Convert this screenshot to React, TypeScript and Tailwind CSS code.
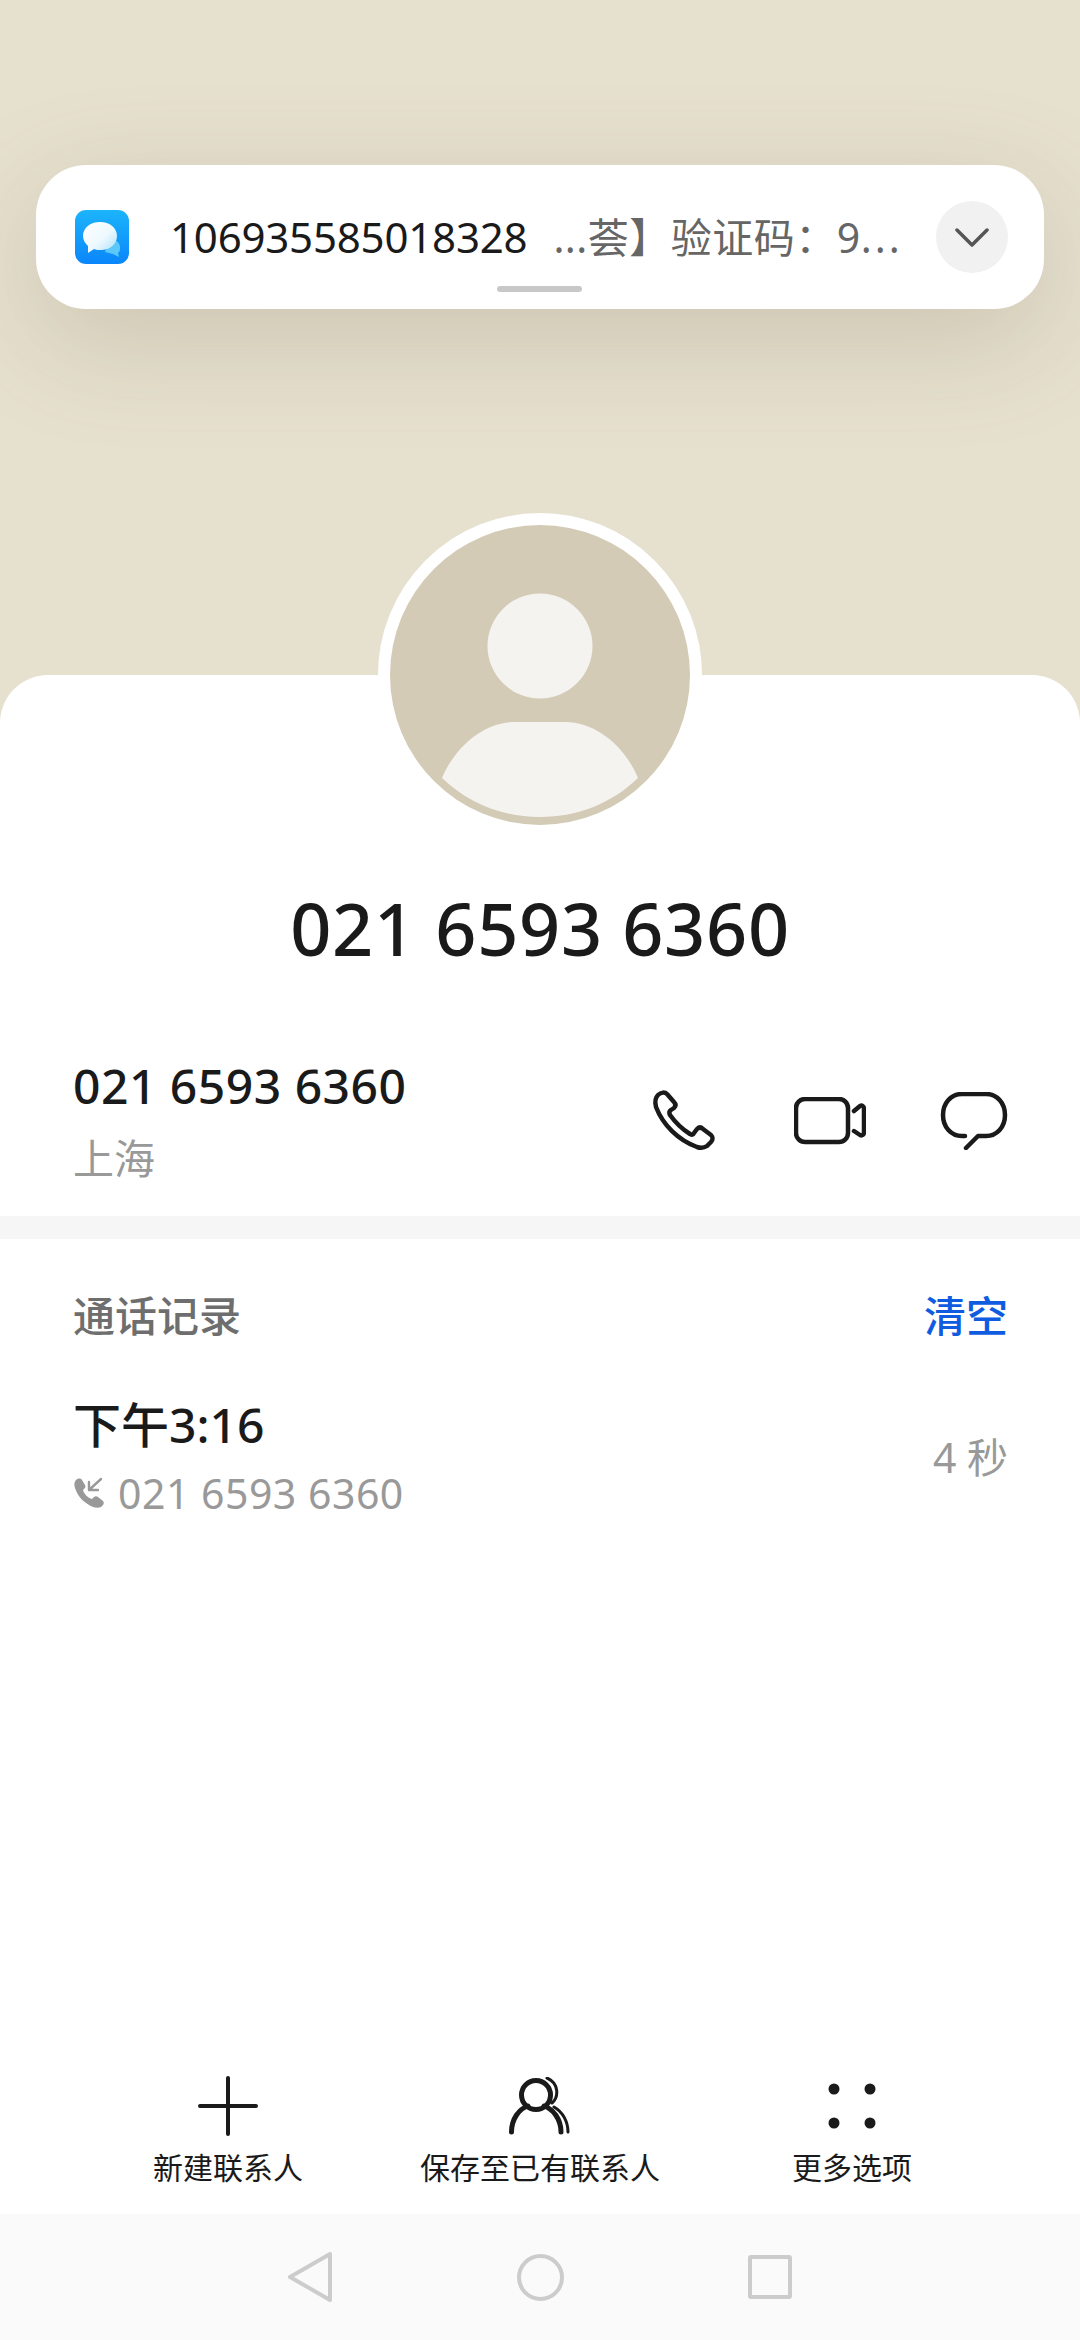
const font = { fontFamily: '"Noto Sans", "Noto Sans CJK SC", sans-serif' };

function MessageLogo() {
  return (
    <svg width="54" height="54" viewBox="0 0 54 54" className="shrink-0">
      <defs>
        <linearGradient id="logoBg" x1="0" y1="0" x2="0" y2="1">
          <stop offset="0" stopColor="#1cb4fb" />
          <stop offset="1" stopColor="#0a86fb" />
        </linearGradient>
        <linearGradient id="logoBubble" x1="0" y1="0" x2="1" y2="1">
          <stop offset="0" stopColor="#ffffff" />
          <stop offset="0.55" stopColor="#eef9fe" />
          <stop offset="1" stopColor="#a9def8" />
        </linearGradient>
      </defs>
      <rect width="54" height="54" rx="11" fill="url(#logoBg)" />
      <path d="M36 28 C42 30 46 34 45 39 C45 41 44 42 43 43 L44 47 L38 44 L30 42 Z" fill="#5cc8fa" />
      <path d="M25 12 C35 12 42 18 42 26 C42 34 35 40 26 40 C23 40 21 40 19 39 L13 43 L13 36 C10 33 8 30 8 26 C8 18 15 12 25 12 Z" fill="url(#logoBubble)" />
    </svg>
  );
}

function PhoneIcon() {
  return (
    <svg width="72" height="72" viewBox="30 35 72 72" fill="none" stroke="#1a1a1a" strokeWidth="4.5" strokeLinejoin="round" strokeLinecap="round">
      <path d="M38 45 C41 42 45 42 47 44 L54 52 C56 54 56 56 54 58 L51 60 C49 61 49 63 50 65 C55 72 62 79 70 84 C72 85 73 85 74 83 L77 79 C79 77 81 77 83 79 L91 85 C93 87 93 90 91 92 L87 96 C84 98 80 98 77 97 C58 90 43 75 36 57 C35 53 35 48 38 45 Z" />
    </svg>
  );
}

function VideoIcon() {
  return (
    <svg width="72" height="48" viewBox="0 0 72 48" fill="none" stroke="#1a1a1a" strokeWidth="4.5" strokeLinecap="round" strokeLinejoin="round">
      <rect x="2" y="2" width="52" height="43" rx="9" />
      <path d="M60 14 L66 9 C68 8 70 9 70 12 L70 35 C70 38 68 39 66 38 L60 34" />
    </svg>
  );
}

function ChatIcon() {
  return (
    <svg width="68" height="58" viewBox="0 0 68 58" fill="none" stroke="#1a1a1a" strokeWidth="4.5" strokeLinecap="round" strokeLinejoin="round">
      <path d="M25 44 L22 44 C11 44 3 35 3 23 C3 11 11 2 22 2 L46 2 C57 2 65 11 65 23 C65 35 57 44 46 44 L38 44 L26 56" />
    </svg>
  );
}

function IncomingCallIcon() {
  return (
    <svg width="32" height="32" viewBox="0 0 32 32" fill="#999999">
      <path d="M3 3 C5 1 8 1 9 3 L12 8 C13 10 12 11 11 12 L10 13 C11 17 15 21 19 22 L21 20 C22 19 24 19 25 20 L30 24 C31 25 31 27 30 28 L28 30 C26 31 23 31 20 30 C11 26 5 20 2 11 C1 8 1 5 3 3 Z" />
      <path d="M28 2 L16 13 M16 5 L16 13 L25 13" fill="none" stroke="#999999" strokeWidth="2.4" strokeLinecap="round" strokeLinejoin="round" />
    </svg>
  );
}

function ToolAction({ icon, label }: { icon: React.ReactNode; label: string }) {
  return (
    <button className="flex flex-col items-center">
      <div className="h-[60px] flex items-center justify-center">{icon}</div>
      <span className="mt-3 text-[30px] leading-[40px] text-[#1a1a1a]">{label}</span>
    </button>
  );
}

export default function App() {
  return (
    <div className="w-[1080px] h-[2340px] flex flex-col overflow-hidden bg-[#e6e0cf]" style={font}>
      {/* notification banner */}
      <div className="h-[675px] shrink-0 px-9 pt-[165px]">
        <div className="relative h-[144px] rounded-[50px] bg-white flex items-center pl-[39px] pr-9 shadow-[0_30px_110px_rgba(110,100,70,0.22)]">
          <MessageLogo />
          <span className="ml-[41px] text-[42px] leading-[60px] tracking-[-0.2px] text-[#1a1a1a]">106935585018328</span>
          <span className="ml-[26px] flex-1 text-[41px] leading-[60px] tracking-[0.5px] text-[#666666] whitespace-nowrap">
            ...荟】验证码：9<span className="tracking-[3px]">...</span>
          </span>
          <div className="w-[72px] h-[72px] rounded-full bg-[#f1f1f1] flex items-center justify-center shrink-0">
            <svg width="34" height="19" viewBox="0 0 34 19" fill="none" stroke="#555555" strokeWidth="3.5" strokeLinecap="round" strokeLinejoin="round">
              <path d="M2 2 L17 17 L32 2" />
            </svg>
          </div>
          <div className="absolute left-[461px] bottom-[17px] w-[85px] h-[6px] rounded-full bg-[#c8c8c8]" />
        </div>
      </div>

      {/* contact card */}
      <div className="flex-1 flex flex-col rounded-t-[48px] bg-white">
        <div className="-mt-[162px] mx-auto w-[324px] h-[324px] rounded-full border-[12px] border-white bg-white">
          <svg width="300" height="300" viewBox="0 0 300 300">
            <circle cx="150" cy="150" r="150" fill="#d3cbb6" />
            <circle cx="150" cy="121" r="52.5" fill="#f4f3f0" />
            <path d="M52 253 C66 220 95 197 125 197 L175 197 C205 197 234 220 248 253 C222 278 188 292 150 292 C112 292 78 278 52 253 Z" fill="#f4f3f0" />
          </svg>
        </div>

        <h1 className="mt-[46px] text-center text-[72px] leading-[90px] tracking-[0.7px] font-medium text-[#1a1a1a]">021 6593 6360</h1>

        <div className="mt-[83px] pl-[73px] pr-[70px] flex items-center justify-between">
          <div>
            <p className="text-[48px] leading-[60px] tracking-[0.5px] font-medium text-[#1a1a1a]">021 6593 6360</p>
            <p className="mt-[14px] text-[41px] leading-[56px] text-[#999999]">上海</p>
          </div>
          <div className="flex items-center gap-[72px]">
            <div className="w-[72px] flex justify-center"><PhoneIcon /></div>
            <div className="w-[72px] flex justify-center"><VideoIcon /></div>
            <div className="w-[72px] flex justify-center"><ChatIcon /></div>
          </div>
        </div>

        <div className="mt-[30px] h-[23px] bg-[#f6f6f6]" />

        {/* call log */}
        <div className="pl-[73px] pr-[72px] pt-[49px]">
          <div className="flex items-center justify-between">
            <h2 className="text-[42px] leading-[56px] font-medium text-[#6e6e6e]">通话记录</h2>
            <button className="text-[42px] leading-[56px] font-medium text-[#0f5ce0]">清空</button>
          </div>
          <div className="mt-[51px] flex items-center justify-between">
            <div>
              <p className="text-[48px] leading-[60px] font-medium text-[#1a1a1a]">下午3:16</p>
              <div className="mt-[13px] flex items-center gap-[13px]">
                <IncomingCallIcon />
                <span className="text-[41px] leading-[50px] tracking-[0.5px] text-[#999999]">021 6593 6360</span>
              </div>
            </div>
            <span className="text-[41px] leading-[50px] text-[#999999]">4 秒</span>
          </div>
        </div>

        {/* bottom actions */}
        <div className="mt-auto px-[72px] pb-[26px] grid grid-cols-3">
          <ToolAction
            label="新建联系人"
            icon={
              <svg width="60" height="60" viewBox="0 0 60 60" stroke="#1a1a1a" strokeWidth="4" strokeLinecap="round">
                <path d="M30 2 L30 58 M2 30 L58 30" />
              </svg>
            }
          />
          <ToolAction
            label="保存至已有联系人"
            icon={
              <svg width="62" height="58" viewBox="0 0 62 58" fill="none" stroke="#1a1a1a" strokeLinecap="round">
                <circle cx="27" cy="18" r="14.5" strokeWidth="5" />
                <path d="M2.5 55 C2.5 42 10 32 19 29 M35 29 C44 32 52 42 52 55" strokeWidth="5" />
                <path d="M38 1 C50 6 50 20 43 26 M45 30 C54 35 59 45 59 55" strokeWidth="3" />
              </svg>
            }
          />
          <ToolAction
            label="更多选项"
            icon={
              <svg width="48" height="46" viewBox="0 0 48 46" fill="#1a1a1a">
                <circle cx="6" cy="6" r="5.5" />
                <circle cx="42" cy="6" r="5.5" />
                <circle cx="6" cy="40" r="5.5" />
                <circle cx="42" cy="40" r="5.5" />
              </svg>
            }
          />
        </div>

        {/* system nav bar */}
        <div className="h-[126px] bg-[#fafafa] grid grid-cols-3 px-[195px] items-center">
          <div className="flex justify-center">
            <svg width="46" height="52" viewBox="0 0 46 52" fill="none" stroke="#cccccc" strokeWidth="4" strokeLinejoin="round">
              <path d="M43 3 L43 49 L3 26 Z" />
            </svg>
          </div>
          <div className="flex justify-center">
            <div className="w-[47px] h-[47px] rounded-full border-4 border-[#cccccc]" />
          </div>
          <div className="flex justify-center">
            <div className="w-[44px] h-[44px] rounded-[3px] border-4 border-[#cccccc]" />
          </div>
        </div>
      </div>
    </div>
  );
}
